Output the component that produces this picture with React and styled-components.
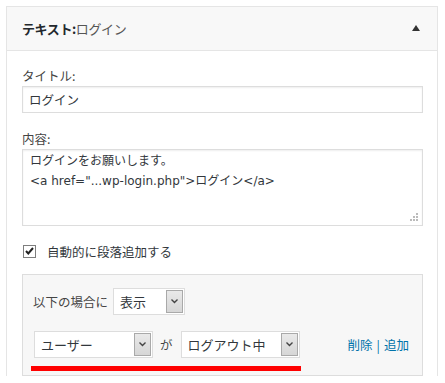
import React from "react";
import styled, { createGlobalStyle } from "styled-components";

const Global = createGlobalStyle`
  html, body { margin: 0; padding: 0; background: #fff; }
  body {
    font-family: "Noto Sans CJK JP", "Noto Sans", "Liberation Sans", sans-serif;
    font-size: 13px;
    color: #32373c;
  }
  * { box-sizing: border-box; }
`;

const Page = styled.div`
  padding: 6px 0 0 6px;
`;

const Widget = styled.div`
  width: 432px;
  border: 1px solid #e5e5e5;
  border-bottom: none;
  background: #fff;
`;

const Header = styled.div`
  height: 44px;
  background: #f8f8f8;
  border-bottom: 1px solid #e5e5e5;
  display: flex;
  align-items: center;
  justify-content: space-between;
  padding: 0 17px 0 15px;
`;

const Title = styled.div`
  font-size: 13px;
  line-height: 20px;
  color: #23282d;
  font-weight: 700;
  letter-spacing: -0.4px;
`;

const InTitle = styled.span`
  font-weight: 400;
  color: #555;
`;

const Toggle = styled.span`
  width: 0;
  height: 0;
  border-left: 4px solid transparent;
  border-right: 4px solid transparent;
  border-bottom: 6px solid #333;
  margin-top: -2px;
`;

const Content = styled.div`
  padding: 15px 14px 0 15px;
`;

const Label = styled.div`
  line-height: 20px;
  height: 20px;
  font-size: 12.5px;
  color: #444;
  margin-top: ${(p) => p.$top || 0}px;
`;

const TextInput = styled.div`
  height: 27px;
  border: 1px solid #ddd;
  box-shadow: inset 0 1px 2px rgba(0, 0, 0, 0.07);
  padding: 0 6px;
  display: flex;
  align-items: center;
  font-size: 12.5px;
  color: #32373c;
  background: #fff;
`;

const AreaWrap = styled.div`
  position: relative;
`;

const TextArea = styled.textarea`
  display: block;
  width: 100%;
  height: 77px;
  border: 1px solid #ddd;
  box-shadow: inset 0 1px 2px rgba(0, 0, 0, 0.07);
  padding: 1px 7px;
  margin: 0;
  resize: none;
  font-family: "DejaVu Sans", "Noto Sans CJK JP", sans-serif;
  font-size: 12px;
  line-height: 20px;
  color: #32373c;
  outline: none;
`;

const Grip = styled.svg`
  position: absolute;
  right: 5px;
  bottom: 5px;
`;

const CheckRow = styled.label`
  display: flex;
  align-items: center;
  height: 20px;
  margin-top: 15px;
  padding-left: 1px;
  font-size: 12.5px;
  color: #32373c;
`;

const CheckBox = styled.span`
  width: 13px;
  height: 13px;
  border: 1px solid #7e7e7e;
  background: #fff;
  display: inline-flex;
  align-items: center;
  justify-content: center;
  margin-right: 11px;
`;

const CondBox = styled.div`
  margin-top: 13px;
  border: 1px solid #ddd;
  background: #f7f7f7;
  padding: 13px 10px 4px 10px;
`;

const Row = styled.div`
  display: flex;
  align-items: center;
  margin-top: ${(p) => p.$top || 0}px;
  padding-left: ${(p) => p.$indent || 0}px;
`;

const RowText = styled.span`
  font-size: 12.5px;
  color: #444;
  margin-right: ${(p) => p.$mr || 0}px;
  margin-left: ${(p) => p.$ml || 0}px;
`;

const Select = styled.div`
  width: ${(p) => p.$w}px;
  height: 27px;
  border: 1px solid #ddd;
  background: #fff;
  display: flex;
  align-items: stretch;
  padding: 1px;
`;

const SelectValue = styled.span`
  flex: 1;
  display: flex;
  align-items: center;
  padding-left: 5px;
  font-size: 13px;
  color: #32373c;
`;

const ArrowBtn = styled.span`
  width: 17px;
  border: 1px solid #a9a9a9;
  background: linear-gradient(#e9e9e9, #d6d6d6);
  display: flex;
  align-items: center;
  justify-content: center;
`;

const Links = styled.div`
  margin-left: auto;
  margin-right: 3px;
  font-size: 12.5px;
  color: #0073aa;
  display: flex;
  gap: 4px;
`;

const Link = styled.a`
  color: #0073aa;
  text-decoration: none;
`;

const Sep = styled.span`
  color: #0073aa;
`;

const RedBar = styled.div`
  width: 270px;
  height: 5px;
  background: #ff0000;
  margin: 8px 0 0 -2px;
`;

const Chevron = () => (
  <svg width="7" height="5" viewBox="0 0 7 5">
    <path d="M0.5 0.5 L3.5 3.5 L6.5 0.5" fill="none" stroke="#444" strokeWidth="1.4" />
  </svg>
);

const FakeSelect = ({ w, value }) => (
  <Select $w={w}>
    <SelectValue>{value}</SelectValue>
    <ArrowBtn>
      <Chevron />
    </ArrowBtn>
  </Select>
);

export default function App() {
  return (
    <Page>
      <Global />
      <Widget>
        <Header>
          <Title>
            テキスト:<InTitle>ログイン</InTitle>
          </Title>
          <Toggle />
        </Header>
        <Content>
          <Label>タイトル:</Label>
          <TextInput>ログイン</TextInput>
          <Label $top={16}>内容:</Label>
          <AreaWrap>
            <TextArea
              readOnly
              defaultValue={'ログインをお願いします。\n<a href="...wp-login.php">ログイン</a>'}
            />
            <Grip width="8" height="8" viewBox="0 0 8 8">
              <g fill="#bbb">
                <rect x="6" y="0" width="2" height="2" />
                <rect x="3" y="3" width="2" height="2" />
                <rect x="6" y="3" width="2" height="2" />
                <rect x="0" y="6" width="2" height="2" />
                <rect x="3" y="6" width="2" height="2" />
                <rect x="6" y="6" width="2" height="2" />
              </g>
            </Grip>
          </AreaWrap>
          <CheckRow>
            <CheckBox>
              <svg width="9" height="8" viewBox="0 0 9 8">
                <path d="M1 4 L3.3 6.5 L8 1" fill="none" stroke="#222" strokeWidth="2" />
              </svg>
            </CheckBox>
            自動的に段落追加する
          </CheckRow>
          <CondBox>
            <Row>
              <RowText $mr={5}>以下の場合に</RowText>
              <FakeSelect w={72} value="表示" />
            </Row>
            <Row $top={16} $indent={1}>
              <FakeSelect w={119} value="ユーザー" />
              <RowText $ml={7} $mr={8}>が</RowText>
              <FakeSelect w={119} value="ログアウト中" />
              <Links>
                <Link href="#">削除</Link>
                <Sep>|</Sep>
                <Link href="#">追加</Link>
              </Links>
            </Row>
            <RedBar />
          </CondBox>
        </Content>
      </Widget>
    </Page>
  );
}
